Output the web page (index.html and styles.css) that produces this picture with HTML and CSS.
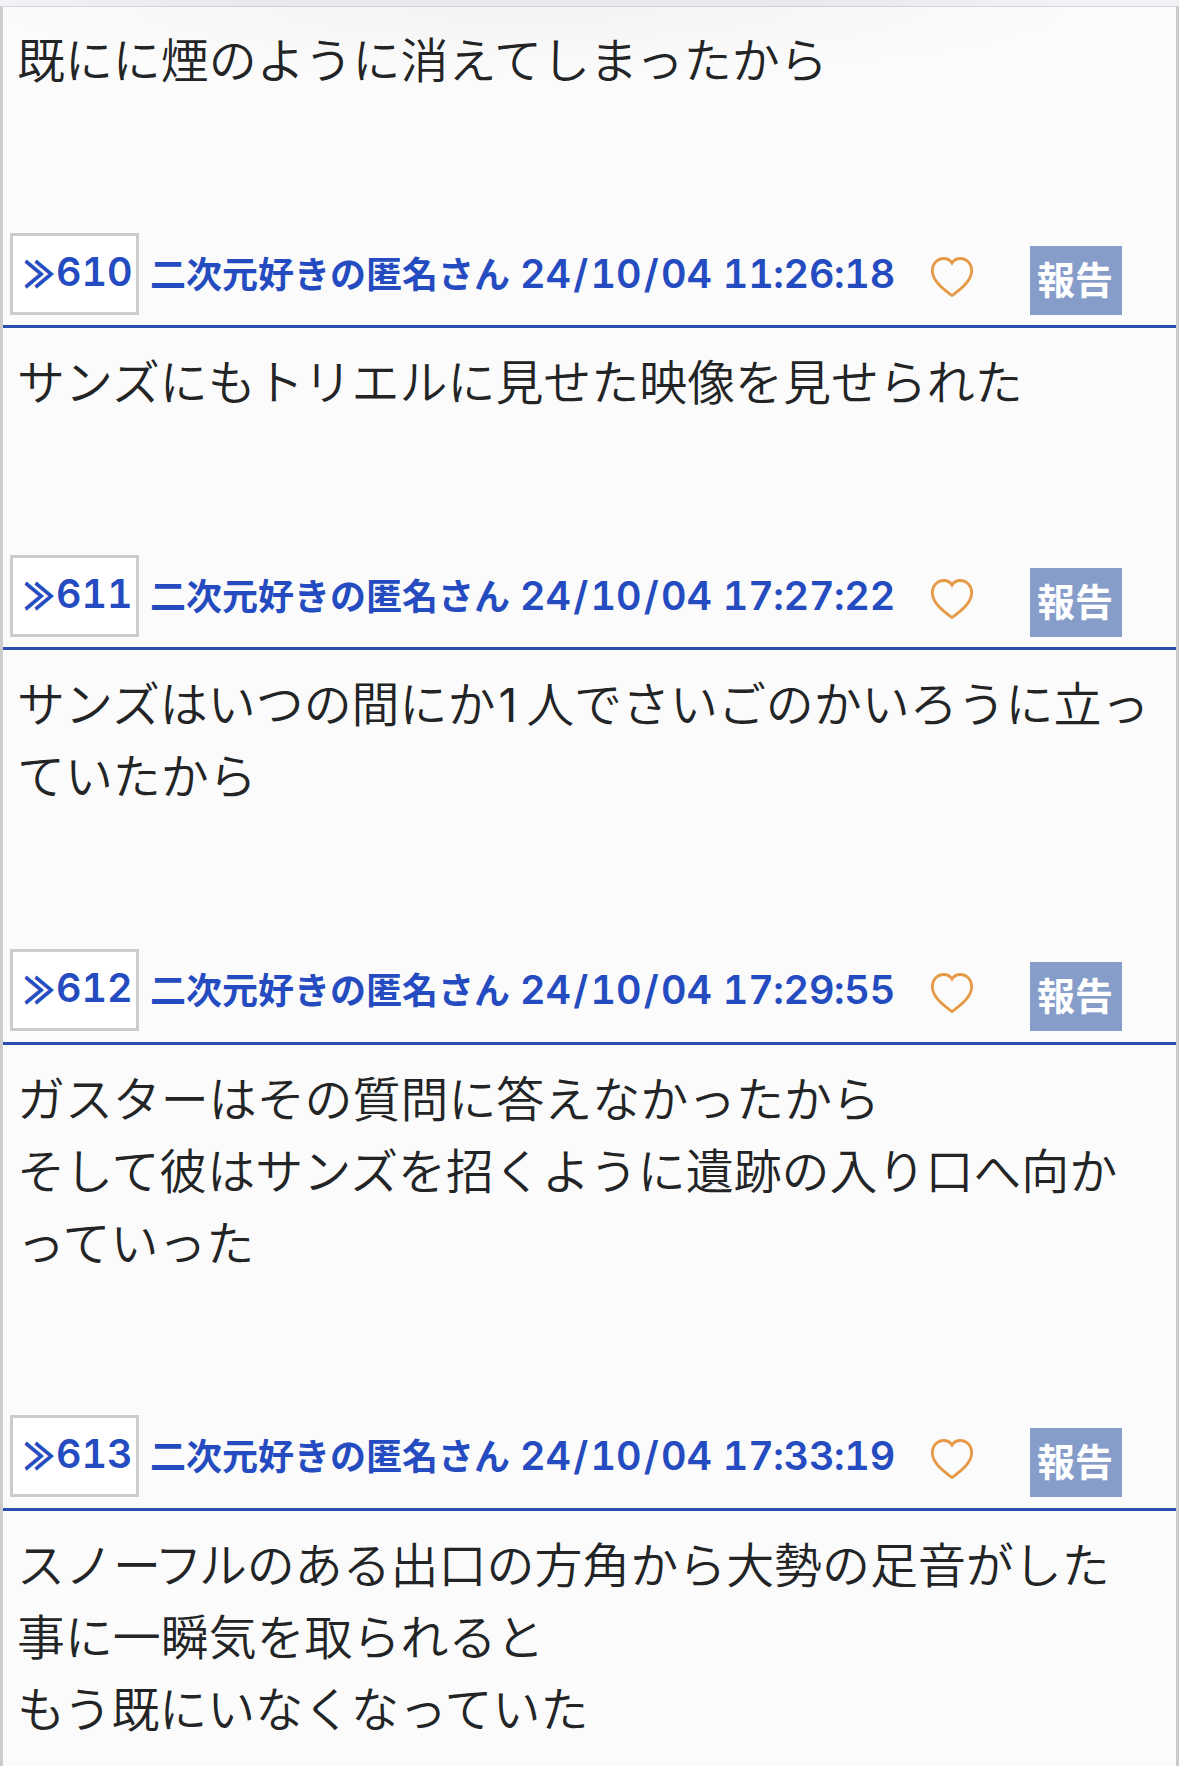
FILE: index.html
```html
<!DOCTYPE html>
<html lang="ja">
<head>
    <meta charset="UTF-8">
    <meta name="viewport" content="width=device-width, initial-scale=1.0">
    <title>スレッド</title>
    <link rel="stylesheet" href="styles.css">
</head>
<body>
    <div class="topbar"></div>

    <ul class="thread">
        <li class="res first">
            <div class="resbody"><p>既にに煙のように消えてしまったから</p></div>
        </li>

        <li class="res">
            <div class="resheader">
                <a class="resnum"><span class="arrow">≫</span>610</a>
                <span class="resname">二次元好きの匿名さん</span>
                <span class="resposted">24<i>/</i>10<i>/</i>04 11<b>:</b>26<b>:</b>18</span>
                <svg class="heart" viewBox="0 0 44 42"><path d="M22 39.5C16 35 2.3 26 2.3 14.5C2.3 7.5 7.5 2.5 13.5 2.5C17 2.5 20.3 4 22 7C23.7 4 27 2.5 30.5 2.5C36.5 2.5 41.7 7.5 41.7 14.5C41.7 26 28 35 22 39.5Z"/></svg>
                <button class="report">報告</button>
            </div>
            <div class="resbody"><p>サンズにもトリエルに見せた映像を見せられた</p></div>
        </li>

        <li class="res">
            <div class="resheader">
                <a class="resnum"><span class="arrow">≫</span>611</a>
                <span class="resname">二次元好きの匿名さん</span>
                <span class="resposted">24<i>/</i>10<i>/</i>04 17<b>:</b>27<b>:</b>22</span>
                <svg class="heart" viewBox="0 0 44 42"><path d="M22 39.5C16 35 2.3 26 2.3 14.5C2.3 7.5 7.5 2.5 13.5 2.5C17 2.5 20.3 4 22 7C23.7 4 27 2.5 30.5 2.5C36.5 2.5 41.7 7.5 41.7 14.5C41.7 26 28 35 22 39.5Z"/></svg>
                <button class="report">報告</button>
            </div>
            <div class="resbody"><p>サンズはいつの間にか<span class="num">1</span>人でさいごのかいろうに立っ<br>ていたから</p></div>
        </li>

        <li class="res">
            <div class="resheader">
                <a class="resnum"><span class="arrow">≫</span>612</a>
                <span class="resname">二次元好きの匿名さん</span>
                <span class="resposted">24<i>/</i>10<i>/</i>04 17<b>:</b>29<b>:</b>55</span>
                <svg class="heart" viewBox="0 0 44 42"><path d="M22 39.5C16 35 2.3 26 2.3 14.5C2.3 7.5 7.5 2.5 13.5 2.5C17 2.5 20.3 4 22 7C23.7 4 27 2.5 30.5 2.5C36.5 2.5 41.7 7.5 41.7 14.5C41.7 26 28 35 22 39.5Z"/></svg>
                <button class="report">報告</button>
            </div>
            <div class="resbody"><p>ガスターはその質問に答えなかったから<br>そして彼はサンズを招くように遺跡の入り口へ向か<br>っていった</p></div>
        </li>

        <li class="res">
            <div class="resheader">
                <a class="resnum"><span class="arrow">≫</span>613</a>
                <span class="resname">二次元好きの匿名さん</span>
                <span class="resposted">24<i>/</i>10<i>/</i>04 17<b>:</b>33<b>:</b>19</span>
                <svg class="heart" viewBox="0 0 44 42"><path d="M22 39.5C16 35 2.3 26 2.3 14.5C2.3 7.5 7.5 2.5 13.5 2.5C17 2.5 20.3 4 22 7C23.7 4 27 2.5 30.5 2.5C36.5 2.5 41.7 7.5 41.7 14.5C41.7 26 28 35 22 39.5Z"/></svg>
                <button class="report">報告</button>
            </div>
            <div class="resbody"><p>スノ<span class="kern">ーフ</span>ルのある出口の方角から大勢の足音がした<br>事に一瞬気を取られると<br>もう既にいなくなっていた</p></div>
        </li>
    </ul>
</body>
</html>
```
FILE: styles.css
```css
* { box-sizing: border-box; }
body { margin: 0; height: 1766px; overflow: hidden; background: #fbfbfb; color: #222426; font-family: "Noto Sans CJK JP", sans-serif; display: flex; flex-direction: column; }
.topbar { flex: none; height: 7px; background: linear-gradient(90deg, #f1f2f6, #e9eaed 20%, #e9eaed 70%, #f1f2f6 90%); border-bottom: 1px solid #d4d4d6; }
.thread { flex: 1; min-height: 0; overflow: hidden; margin: 0; padding: 0; list-style: none; border: 3px solid #ccc; border-top: 0; border-bottom: 0; background: radial-gradient(ellipse 530px 66px at 45% 0, #f3f3f3, #fbfbfb); }
.resheader { display: flex; align-items: flex-start; height: 95.35px; padding-left: 7px; border-bottom: 3px solid #2a4db0; color: #244bc0; font-weight: bold; white-space: nowrap; }
.resnum { display: flex; width: 129px; height: 82px; padding-left: 11px; background: #fff; border: 3px solid #ccc; font: 600 39.5px/73px Inter, sans-serif; font-variant-numeric: tabular-nums; }
.arrow { width: 32px; font: bold 36px/72px "Noto Sans CJK JP", sans-serif; transform: scaleX(0.84); transform-origin: left; -webkit-text-stroke: 0.8px #244bc0; }
.resname { width: 360px; margin-left: 11px; font-size: 36px; line-height: 79px; }
.resposted { width: 376px; margin-left: 10px; font: 600 39.5px/83px Inter, sans-serif; font-variant-numeric: tabular-nums; }
.resposted i, .resposted b { font-style: normal; font-weight: 600; font-variant-numeric: normal; }
.resposted i { margin: 0 2.2px; }
.resposted b { margin: 0 -1.5px; }
.heart { width: 44px; height: 42px; margin: 23px 0 0 34px; fill: none; stroke: #e69a47; stroke-width: 2.8; }
.report { width: 92px; height: 69px; margin: 13px 0 0 56px; padding: 0 2px 6px 0; border: 0; background: #869dca; color: #fff; font: bold 38px/60px "Noto Sans CJK JP", sans-serif; }
.resbody { padding: 15px 14px 139.75px; font-size: 47.95px; line-height: 72px; font-weight: 350; white-space: nowrap; }
.resbody p { margin: 0; }
.num { margin: 0 9px 0 3px; font-family: Inter, sans-serif; font-size: 46px; font-weight: 400; line-height: 1; }
.kern { letter-spacing: -3.5px; }
.first .resbody { padding-top: 14px; padding-bottom: 140px; }
.res:last-child .resbody { padding-bottom: 0; }
```
